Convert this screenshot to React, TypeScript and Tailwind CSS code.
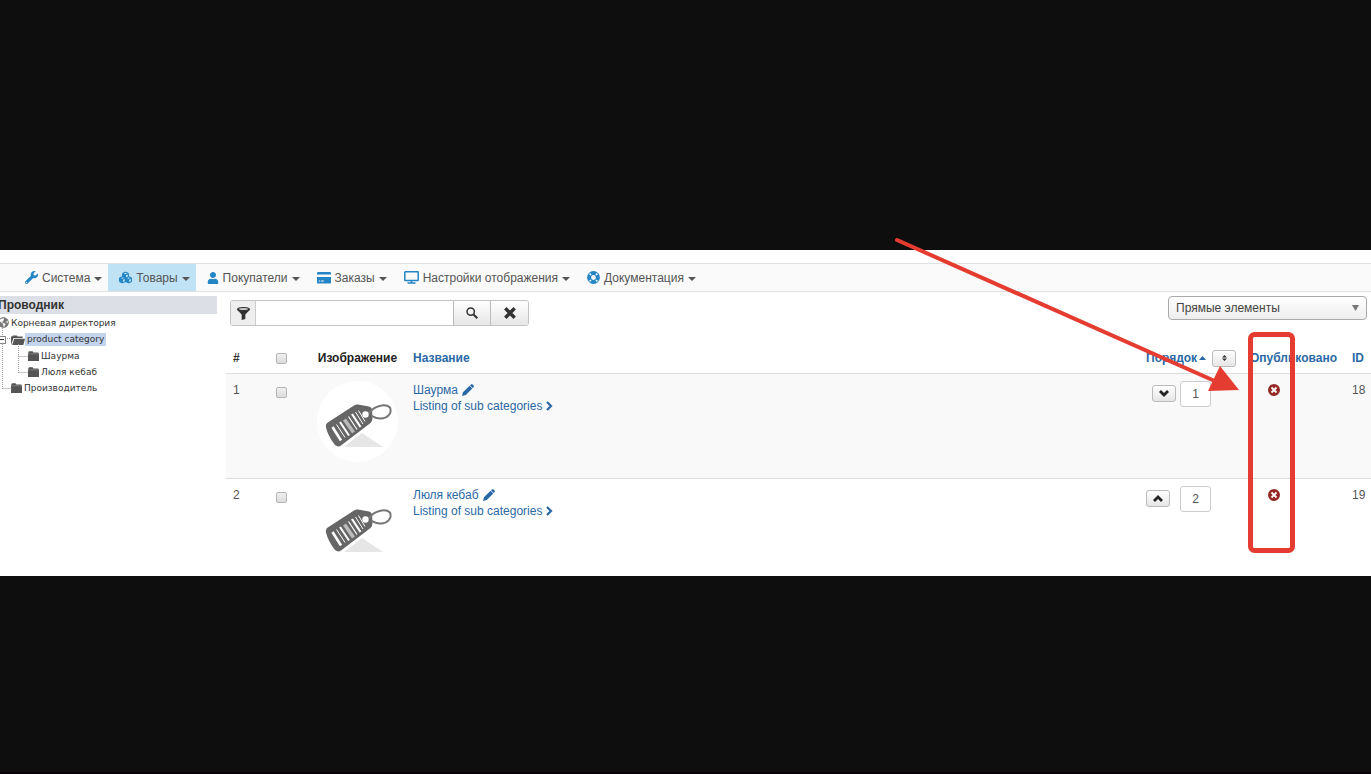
import { useState } from "react";
import type { ReactNode } from "react";
import { FaUser, FaWrench, FaGlobeAmericas } from "react-icons/fa";
import { FaCubes } from "react-icons/fa6";

const CardIcon = () => (
  <svg viewBox="0 0 14 12" className="w-[14px] h-3 shrink-0" fill="currentColor">
    <path d="M1.2 0h11.6A1.2 1.2 0 0 1 14 1.2V2.6H0V1.2A1.2 1.2 0 0 1 1.2 0z" />
    <path fillRule="evenodd" d="M0 5h14v5.4a1.2 1.2 0 0 1-1.2 1.2H1.2A1.2 1.2 0 0 1 0 10.4zM1.8 8.4h1.4v1H1.8zM4.2 8.4h2.6v1H4.2z" />
  </svg>
);

const ScreenIcon = () => (
  <svg viewBox="0 0 15 13" className="w-[15px] h-[13px] shrink-0" fill="none" stroke="currentColor" strokeWidth="1.5">
    <rect x="0.8" y="0.8" width="13.4" height="8.8" rx="0.5" />
    <path d="M7.5 9.6v2M3.5 12h8" />
  </svg>
);

const BuoyIcon = () => (
  <svg viewBox="0 0 13 13" className="w-[13px] h-[13px] shrink-0" fill="none">
    <circle cx="6.5" cy="6.5" r="4.4" stroke="currentColor" strokeWidth="4" />
    <path d="M2.6 2.6l1.4 1.4M10.4 2.6L9 4M2.6 10.4L4 9M10.4 10.4L9 9" stroke="#fff" strokeWidth="1.6" />
  </svg>
);

const PencilIcon = () => (
  <svg viewBox="0 0 12 12" className="w-3 h-3" fill="currentColor">
    <path d="M0 12l1-3.8L7.6 1.7l2.7 2.7L3.8 11zM8 1.300L9 .4q.8-.7 1.600 0l1 1q.7.8 0 1.600l-.9 1z" />
  </svg>
);

const FunnelIcon = () => (
  <svg viewBox="0 0 12 12" className="w-[13px] h-[13px]">
    <path d="M0 2C0 .8 2.7 0 6 0s6 .8 6 2c0 .8-.6 1.2-1.2 1.8L7.7 7v4L4.3 12V7L1.2 3.8C.6 3.2 0 2.8 0 2z" fill="#333" />
    <ellipse cx="6" cy="1.9" rx="4.4" ry="0.7" fill="#fff" />
  </svg>
);

const SearchIcon = () => (
  <svg viewBox="0 0 12 12" className="w-3 h-3" fill="none" stroke="#333">
    <circle cx="4.7" cy="4.6" r="3.7" strokeWidth="1.5" />
    <path d="M7.5 7.5l3.8 3.8" strokeWidth="2" />
  </svg>
);

const CrossIcon = () => (
  <svg viewBox="0 0 12 12" className="w-3 h-3" stroke="#333" strokeWidth="3.4">
    <path d="M1.3 1.3l9.4 9.4M10.7 1.3l-9.4 9.4" />
  </svg>
);

const FolderIcon = ({ open }: { open?: boolean }) => (
  <svg viewBox="0 0 12 10" className={open ? "w-[14px] h-[10px] shrink-0" : "w-[11px] h-[10px] shrink-0"} preserveAspectRatio="none">
    {open ? (
      <path d="M0 10V1.5h1L1.6.5H5l.6 1H10V3H2.2zM1 10L2.8 3.8H12L10.6 10z" fill="#555" />
    ) : (
      <>
        <path d="M0 2.2L1 .3h4l.8 1.2H11l1 .8V10H0z" fill="#555" />
        <path d="M0 2.8h12" stroke="#999" strokeWidth="0.6" />
      </>
    )}
  </svg>
);

const TagPicture = () => (
  <svg viewBox="0 0 81 81" className="w-[81px] h-[81px] block mx-auto">
    <circle cx="40.5" cy="40.5" r="40.5" fill="#fff" />
    <path d="M27 66L45 52l21 14z" fill="#e6e6e6" />
    <path
      d="M10 42L37 24.5q2-1.3 4-1L52 25.5q2.5.6 3 3L55.5 37q0 3-2 5L24 64.5q-3 2-6-.5Q11 55 9 46.500 8.300 43.500 10 42z"
      fill="#666"
    />
    <path d="M52 32C57 25 68 22 73 26.5c2.5 6-3 11.5-10 11-4 0-6-1.5-9-3" fill="none" stroke="#777" strokeWidth="2" />
    <circle cx="48.5" cy="33.5" r="3.2" fill="#fff" />
    <g stroke="#fff">
      <path d="M15.5 46L24 59.500" strokeWidth="2.6" />
      <path d="M19.5 43.5l8.500 13" strokeWidth="1" />
      <path d="M23 41l9 13.500" strokeWidth="2" />
      <path d="M27.5 38.5L36.500 51.500" strokeWidth="3.6" stroke="#bbb" />
      <path d="M31.5 35.5l8.500 13" strokeWidth="1.2" />
      <path d="M35 33l8.500 13" strokeWidth="2.2" />
      <path d="M38.5 31l7.500 12" strokeWidth="1" />
      <path d="M41.5 29.5l6.500 11" strokeWidth="1" />
    </g>
  </svg>
);

const Caret = () => (
  <svg viewBox="0 0 8 4" className="w-2 h-1 mt-[3px]" fill="#555">
    <path d="M0 0h8L4 4z" />
  </svg>
);

const menu: { label: string; icon: ReactNode; active?: boolean }[] = [
  { label: "Система", icon: <FaWrench size={13} /> },
  { label: "Товары", icon: <FaCubes size={13} />, active: true },
  { label: "Покупатели", icon: <FaUser size={12} /> },
  { label: "Заказы", icon: <CardIcon /> },
  { label: "Настройки отображения", icon: <ScreenIcon /> },
  { label: "Документация", icon: <BuoyIcon /> },
];

const items = [
  { num: 1, name: "Шаурма", order: "1", id: 18, down: true },
  { num: 2, name: "Люля кебаб", order: "2", id: 19, down: false },
];

const checkClass =
  "appearance-none block mx-auto w-[11px] h-[11px] rounded-xs border border-[#b5b5b5] bg-linear-to-b from-[#f0f0f0] to-[#dcdcdc] checked:bg-[#2a6fad]";
const smallButton =
  "flex items-center justify-center w-6 h-[17px] rounded-[3px] border border-[#bbb] bg-linear-to-b from-white to-[#e6e6e6]";

const TopMenu = () => (
  <nav className="flex h-[29px] pl-3.5 border-y border-[#e0e0e0] bg-[#fafafa]">
    {menu.map((m) => (
      <a
        key={m.label}
        href="#"
        className={`flex items-center gap-1 pl-[11px] pr-1.5 text-[#555] whitespace-nowrap ${m.active ? "bg-[#bfe2f5]" : ""}`}
      >
        <span className="text-[#2384c6]">{m.icon}</span>
        <span>{m.label}</span>
        <Caret />
      </a>
    ))}
  </nav>
);

const Sidebar = () => (
  <aside className="w-[217px] shrink-0 pt-1">
    <h2 className="-ml-0.5 bg-[#dcdfe6] font-bold leading-[18px] text-[#333]">Проводник</h2>
    <div className="relative font-['DejaVu_Sans',sans-serif] text-[9px] leading-4 text-[#333]">
      <svg className="absolute left-0 top-0 w-8 h-20" fill="none" stroke="#999" strokeDasharray="1 1">
        <path d="M2.5 14v61M2.5 74.5h9M7 24.5h4M18.5 30v29M18.5 42.5h9M18.5 58.5h9" />
      </svg>
      <a href="#" className="flex items-center h-[17px]">
        <FaGlobeAmericas size={11} className="-ml-0.5 mr-0.5 text-[#777]" />
        Корневая директория
      </a>
      <div className="flex items-center h-[17px]">
        <button aria-label="Свернуть" className="relative -ml-0.5 w-2 h-2 border border-[#888] bg-white flex items-center justify-center">
          <span className="w-1 h-px bg-[#333]" />
        </button>
        <span className="w-[5px]" />
        <FolderIcon open />
        <a href="#" className="bg-[#c4d4ed] leading-[13px] px-0.5">product category</a>
      </div>
      <a href="#" className="flex items-center gap-0.5 h-4 pl-7"><FolderIcon />Шаурма</a>
      <a href="#" className="flex items-center gap-0.5 h-4 pl-7"><FolderIcon />Люля кебаб</a>
      <a href="#" className="flex items-center gap-0.5 h-4 pl-[11px]"><FolderIcon />Производитель</a>
    </div>
  </aside>
);

const Toolbar = () => {
  const [query, setQuery] = useState("");
  return (
    <div className="flex items-start justify-between pl-1 pr-1">
      <div className="flex h-[26px] mt-2 rounded-[3px] border border-[#c4c4c4] overflow-hidden">
        <label htmlFor="filter" aria-label="Фильтр" className="flex items-center justify-center w-[25px] bg-[#eee] border-r border-[#ccc]">
          <FunnelIcon />
        </label>
        <input
          id="filter"
          value={query}
          onChange={(e) => setQuery(e.target.value)}
          className="w-[197px] px-1.5 bg-white outline-none"
        />
        <button aria-label="Искать" className="flex items-center justify-center w-[37px] border-l border-[#bbb] bg-linear-to-b from-white to-[#e6e6e6]">
          <SearchIcon />
        </button>
        <button
          aria-label="Очистить"
          onClick={() => setQuery("")}
          className="flex items-center justify-center w-[38px] border-l border-[#bbb] bg-linear-to-b from-white to-[#e6e6e6]"
        >
          <CrossIcon />
        </button>
      </div>
      <div className="relative mt-1">
        <select
          aria-label="Элементы"
          className="appearance-none w-[199px] h-6 pl-[7px] rounded-[4px] border border-[#aaa] bg-linear-to-b from-white to-[#eee] text-[#444]"
        >
          <option>Прямые элементы</option>
        </select>
        <svg viewBox="0 0 7 6" className="absolute right-2 top-[9px] w-[7px] h-1.5 pointer-events-none" fill="#777">
          <path d="M0 0h7L3.5 6z" />
        </svg>
      </div>
    </div>
  );
};

const ItemsTable = () => (
  <table className="w-full mt-[18px] table-fixed border-collapse text-left">
    <colgroup>
      <col className="w-[26px]" />
      <col className="w-[58px]" />
      <col className="w-[95px]" />
      <col />
      <col className="w-[104px]" />
      <col className="w-[102px]" />
      <col className="w-[26px]" />
    </colgroup>
    <thead>
      <tr className="h-[29px] whitespace-nowrap text-[#2a69a6]">
        <th className="pl-[7px] text-[#333]">#</th>
        <th><input type="checkbox" aria-label="Выбрать все" className={checkClass} /></th>
        <th className="text-center text-[#222]">Изображение</th>
        <th className="pl-2"><a href="#">Название</a></th>
        <th className="pl-[7px]">
          <div className="flex items-center">
            <a href="#">Порядок</a>
            <svg viewBox="0 0 7 4" className="w-[7px] h-1 ml-0.5 mr-1.5" fill="currentColor"><path d="M0 4h7L3.5 0z" /></svg>
            <button aria-label="Сохранить порядок" className={smallButton}>
              <svg viewBox="0 0 5 6" className="w-[5px] h-1.5" fill="#333"><path d="M0 2.4h5L2.5 0zM0 3.6h5L2.5 6z" /></svg>
            </button>
          </div>
        </th>
        <th className="pl-[7px]"><a href="#">Опубликовано</a></th>
        <th className="pl-[7px]"><a href="#">ID</a></th>
      </tr>
    </thead>
    <tbody>
      {items.map((item) => (
        <tr key={item.id} className="border-t border-[#ddd] align-top leading-4 odd:bg-[#f9f9f9]">
          <td className="pl-[7px] pt-2 text-[#555]">{item.num}</td>
          <td className="pt-[13px]"><input type="checkbox" aria-label={item.name} className={checkClass} /></td>
          <td className={item.down ? "pt-[7px] pb-4" : "pt-[7px] pb-[9px]"}><TagPicture /></td>
          <td className="pl-2 pt-2 text-[#2a69a6]">
            <a href="#" className="flex items-center gap-1">{item.name} <PencilIcon /></a>
            <a href="#" className="flex items-center gap-1">
              Listing of sub categories
              <svg viewBox="0 0 7 10" className="w-[7px] h-2.5" fill="none" stroke="currentColor" strokeWidth="2.2"><path d="M1 1l4 4-4 4" /></svg>
            </a>
          </td>
          <td className="pl-[7px] pt-[7px]">
            <div className="flex items-center gap-1">
              <span className={item.down ? "flex w-[30px] justify-end" : "flex w-[30px]"}>
                <button aria-label={item.down ? "Вниз" : "Вверх"} className={smallButton}>
                  <svg viewBox="0 0 10 7" className="w-2.5 h-[7px]" fill="none" stroke="#222" strokeWidth="2.8">
                    {item.down ? <path d="M1 1l4 4L9 1" /> : <path d="M1 6l4-4L9 6" />}
                  </svg>
                </button>
              </span>
              <input aria-label="Порядок" defaultValue={item.order} className="w-[31px] h-[26px] rounded-[3px] border border-[#ccc] bg-white text-center text-[#555]" />
            </div>
          </td>
          <td className="pl-[25px] pt-2.5">
            <button aria-label="Опубликовать" className="block">
              <svg viewBox="0 0 12 12" className="w-3 h-3">
                <circle cx="6" cy="6" r="6" fill="#942a25" />
                <path d="M3.5 3.5l5 5M8.5 3.5l-5 5" stroke="#fff" strokeWidth="1.8" />
              </svg>
            </button>
          </td>
          <td className="pl-[7px] pt-2 text-[#555]">{item.id}</td>
        </tr>
      ))}
    </tbody>
  </table>
);

const Callout = () => (
  <svg viewBox="0 0 500 340" className="absolute right-0 -top-5 w-[500px] h-[340px] pointer-events-none" fill="none" stroke="#e43c30">
    <path d="M26 10l320 142" strokeWidth="4" strokeLinecap="round" />
    <path d="M368 160l-31 1 12-25z" fill="#e43c30" stroke="none" />
    <rect x="379.5" y="104.5" width="42" height="216" rx="4" strokeWidth="5" />
  </svg>
);

const App = () => {
  return (
    <div className="min-h-screen bg-[#0e0e0e] border-b-2 border-[#080108] pt-[250px] font-['Liberation_Sans',sans-serif] text-xs">
      <div className="relative bg-white pt-[13px]">
        <TopMenu />
        <div className="flex">
          <Sidebar />
          <main className="flex-1 min-w-0 pl-[9px]">
            <Toolbar />
            <ItemsTable />
          </main>
        </div>
        <Callout />
      </div>
    </div>
  );
};

export default App;
